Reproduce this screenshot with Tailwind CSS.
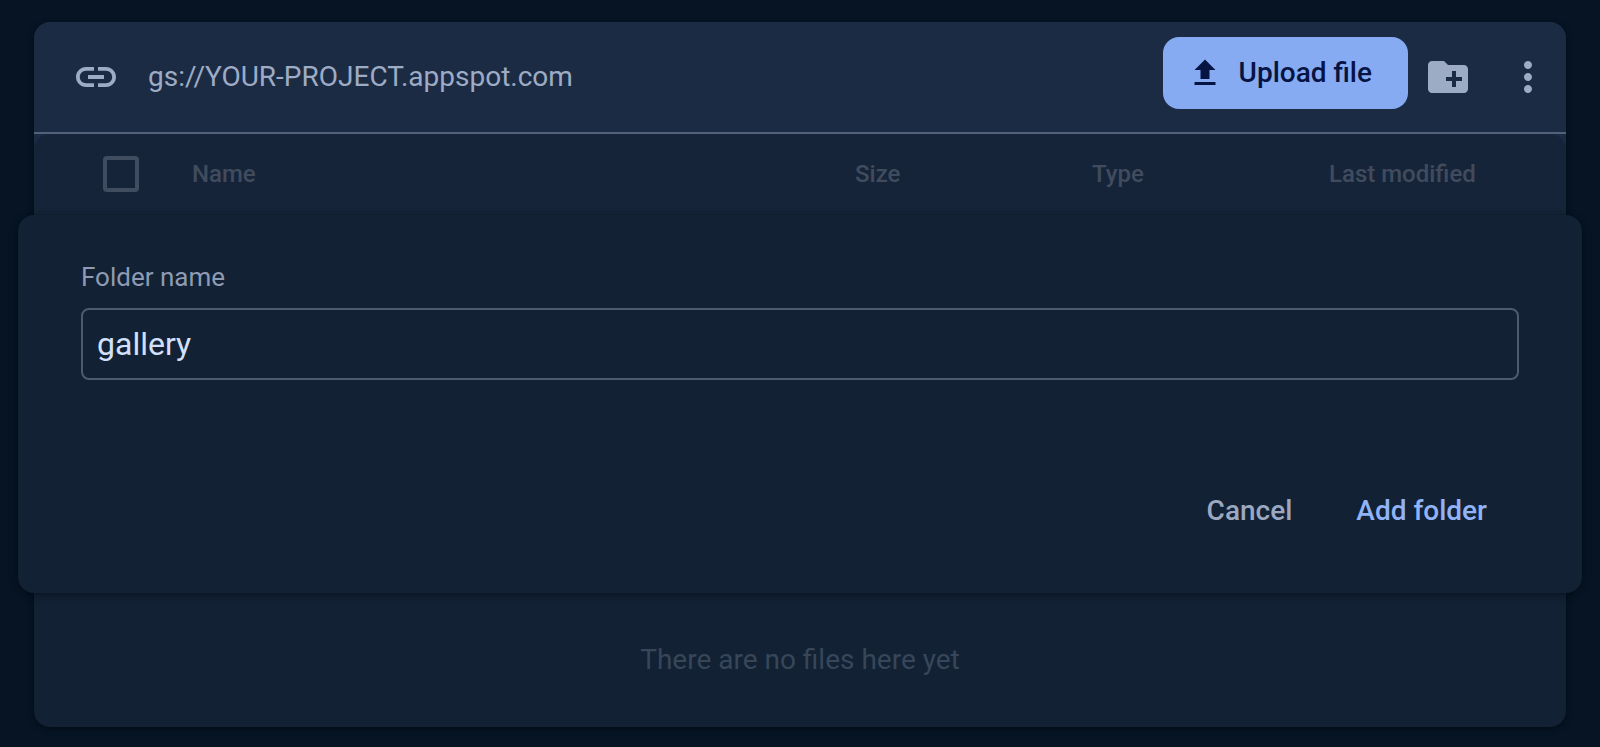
<!DOCTYPE html>
<html lang="en">

<head>
    <meta charset="UTF-8">
    <meta name="viewport" content="width=device-width, initial-scale=1.0">
    <title>Storage - Add folder</title>
    <script src="https://cdn.jsdelivr.net/npm/@tailwindcss/browser@4"></script>
</head>

<body class="bg-[#061424] font-['Roboto',sans-serif]">
    <div class="relative flex min-h-screen flex-col px-[34px] pt-[22px] pb-5">
        <main class="flex flex-1 flex-col rounded-2xl bg-[#122134] shadow-[0_2px_6px_rgba(0,0,0,0.4)]">
            <header class="flex h-28 items-center rounded-t-2xl border-b-2 border-[#52607a] bg-[#1c2b44] pr-[14px] pl-[38px] text-[#9eabc5]">
                <svg class="size-12 shrink-0" viewBox="0 0 24 24" fill="currentColor" aria-hidden="true">
                    <path d="M3.9 12c0-1.71 1.39-3.1 3.1-3.1h4V7H7c-2.76 0-5 2.24-5 5s2.24 5 5 5h4v-1.9H7c-1.71 0-3.1-1.39-3.1-3.1zM8 13h8v-2H8v2zm9-6h-4v1.9h4c1.71 0 3.1 1.39 3.1 3.1s-1.39 3.1-3.1 3.1h-4V17h4c2.76 0 5-2.24 5-5s-2.24-5-5-5z" />
                </svg>
                <span class="ml-7 flex-1 text-[28px] leading-9">gs://YOUR-PROJECT.appspot.com</span>
                <button type="button" class="mb-2 flex h-[72px] items-center gap-4 rounded-2xl bg-[#86abf2] pr-9 pl-6 text-[28px] font-medium text-[#061444]">
                    <svg class="size-9" viewBox="0 0 24 24" fill="currentColor" aria-hidden="true">
                        <path d="M5 20h14v-2H5v2zM5 10h4v6h6v-6h4l-7-7-7 7z" />
                    </svg>
                    Upload file
                </button>
                <button type="button" aria-label="Create folder" class="ml-4">
                    <svg class="size-12" viewBox="0 0 24 24" fill="currentColor" aria-hidden="true">
                        <path d="M20 6h-8l-2-2H4c-1.11 0-1.99.89-1.99 2L2 18c0 1.11.89 2 2 2h16c1.11 0 2-.89 2-2V8c0-1.11-.89-2-2-2zm-1 8h-3v3h-2v-3h-3v-2h3V9h2v3h3v2z" />
                    </svg>
                </button>
                <button type="button" aria-label="More options" class="ml-8">
                    <svg class="size-12" viewBox="0 0 24 24" fill="currentColor" aria-hidden="true">
                        <path d="M12 8c1.1 0 2-.9 2-2s-.9-2-2-2-2 .9-2 2 .9 2 2 2zm0 2c-1.1 0-2 .9-2 2s.9 2 2 2 2-.9 2-2-.9-2-2-2zm0 6c-1.1 0-2 .9-2 2s.9 2 2 2 2-.9 2-2-.9-2-2-2z" />
                    </svg>
                </button>
            </header>

            <div class="bg-[#1c2b44]">
                <table class="w-full table-fixed rounded-t-2xl bg-[#162439] text-left text-2xl text-[#404c5e]">
                    <thead>
                        <tr class="h-20">
                            <th class="w-[158px] pl-[69px]">
                                <input type="checkbox" aria-label="Select all files" class="block size-9 appearance-none rounded-sm border-4 border-[#404c5f]">
                            </th>
                            <th class="font-medium">Name</th>
                            <th class="w-[237px] font-medium">Size</th>
                            <th class="w-[237px] font-medium">Type</th>
                            <th class="w-[237px] font-medium">Last modified</th>
                        </tr>
                    </thead>
                </table>
            </div>

            <p class="mt-auto pb-[47px] text-center text-[28px] leading-10 text-[#38465a]">There are no files here yet</p>
        </main>

        <!-- add folder dialog -->
        <form role="dialog" aria-label="Add folder" class="absolute inset-x-[18px] top-[215px] rounded-2xl bg-[#122134] px-[63px] pt-[46px] pb-12 shadow-[0_2px_8px_rgba(0,0,0,0.4)]">
            <label for="folderName" class="block text-[26px] leading-8 text-[#8e9bb3]">Folder name</label>
            <input type="text" id="folderName" value="gallery"
                class="mt-[15px] block h-[72px] w-full rounded-lg border-2 border-[#4d5a70] px-[14px] text-[32px] text-[#d3e0fb]">
            <div class="mt-[97px] flex justify-end text-[28px] leading-9 font-medium">
                <button type="button" class="px-8 py-4 text-[#9ba8c0]">Cancel</button>
                <button type="submit" class="px-8 py-4 text-[#91b3f8]">Add folder</button>
            </div>
        </form>
    </div>
</body>

</html>
